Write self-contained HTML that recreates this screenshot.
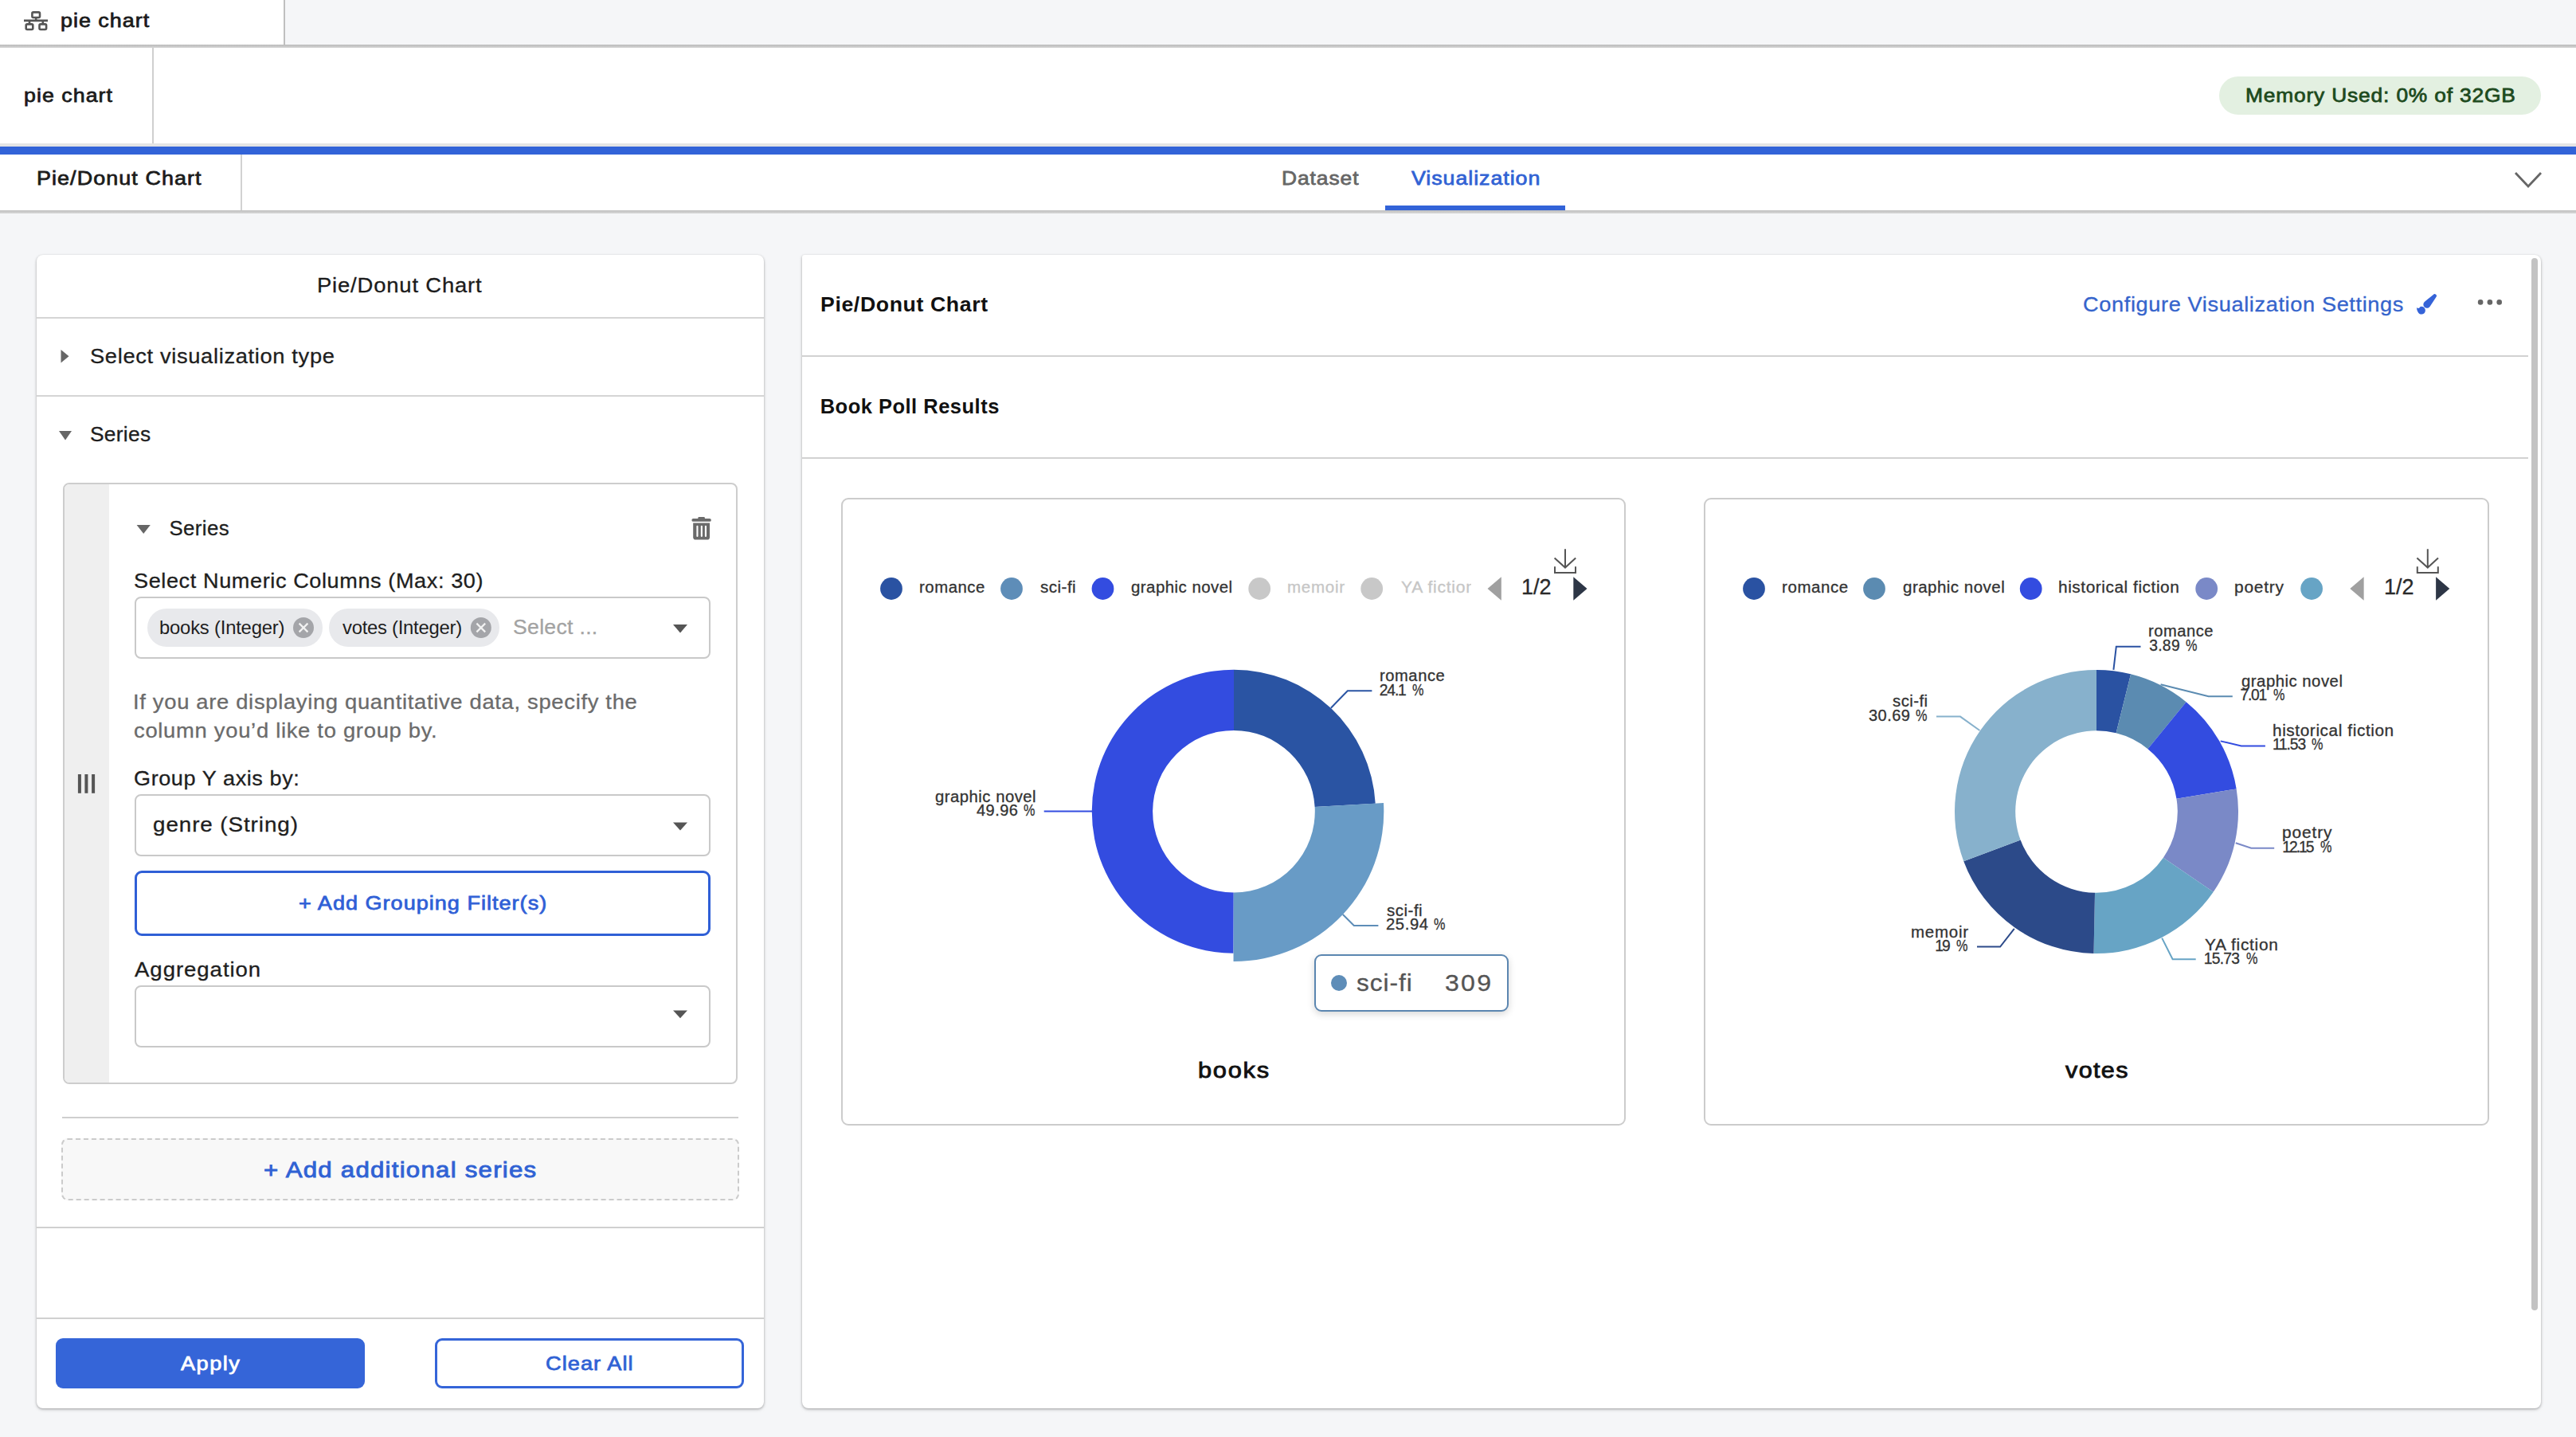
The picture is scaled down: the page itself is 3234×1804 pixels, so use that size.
<!DOCTYPE html><html><head><meta charset="utf-8"><title>pie chart</title><style>
html,body{margin:0;padding:0;}
body{width:3234px;height:1804px;overflow:hidden;position:relative;background:#f5f6f8;font-family:"Liberation Sans",sans-serif;}
.t{position:absolute;white-space:nowrap;line-height:1;}
.b{position:absolute;}
</style></head><body><div class="b" style="left:0px;top:0px;width:3234px;height:56px;background:#f5f6f8"></div>
<div class="b" style="left:0px;top:0px;width:358px;height:56px;background:#fff;border-right:2px solid #bfbfbf;box-sizing:border-box"></div>
<div class="b" style="left:0px;top:56px;width:3234px;height:4px;background:linear-gradient(#bababa,#d4d4d4)"></div>
<div class="b" style="left:0px;top:60px;width:3234px;height:120px;background:#fff"></div>
<div class="b" style="left:191px;top:60px;width:2px;height:120px;background:#cfcfcf"></div>
<div class="b" style="left:0px;top:180px;width:3234px;height:4px;background:#e4e4e4"></div>
<div class="b" style="left:0px;top:184px;width:3234px;height:10px;background:#3263d8"></div>
<div class="b" style="left:0px;top:194px;width:3234px;height:70px;background:#fff"></div>
<div class="b" style="left:302px;top:194px;width:2px;height:70px;background:#d2d2d2"></div>
<div class="b" style="left:0px;top:264px;width:3234px;height:4px;background:linear-gradient(#bfbfbf,#d8d8d8)"></div>
<div class="b" style="left:2786px;top:96px;width:404px;height:48px;background:#e3f0e1;border-radius:24px"></div>
<div class="b" style="left:1739px;top:258px;width:226px;height:6px;background:#3263d8"></div>
<svg class="b" style="left:28px;top:12px" width="34" height="28" viewBox="0 0 34 28"><g fill="none" stroke="#555" stroke-width="2.6"><rect x="12.4" y="3.4" width="9.6" height="6.6" rx="1.5"/><rect x="4.7" y="18.4" width="8.6" height="6.6" rx="1.5"/><rect x="21.5" y="18.4" width="8.6" height="6.6" rx="1.5"/><path d="M17.2 10.5V14M2 13.9H32M9 14V18M25.8 14V18"/></g></svg>
<svg class="b" style="left:3150px;top:208px" width="48" height="36"><polyline points="8,9 24,26 40,9" fill="none" stroke="#666" stroke-width="2.8"/></svg>
<div class="t" style="left:75.92px;top:14px;font-size:24.8px;color:#1b1b1b;-webkit-text-stroke:0.77px #1b1b1b;letter-spacing:0.92px;transform:scaleX(1.0842);transform-origin:0 0;">pie chart</div>
<div class="t" style="left:29.91px;top:108px;font-size:24.5px;color:#1b1b1b;-webkit-text-stroke:0.76px #1b1b1b;letter-spacing:0.97px;transform:scaleX(1.0904);transform-origin:0 0;">pie chart</div>
<div class="t" style="left:2818.94px;top:108px;font-size:24.8px;color:#1d4a1d;-webkit-text-stroke:0.77px #1d4a1d;letter-spacing:0.79px;transform:scaleX(1.0617);transform-origin:0 0;">Memory Used: 0% of 32GB</div>
<div class="t" style="left:45.91px;top:212px;font-size:24.8px;color:#1b1b1b;-webkit-text-stroke:0.77px #1b1b1b;letter-spacing:0.99px;transform:scaleX(1.0852);transform-origin:0 0;">Pie/Donut Chart</div>
<div class="t" style="left:1608.94px;top:212px;font-size:24.8px;color:#666666;-webkit-text-stroke:0.77px #666666;letter-spacing:0.86px;transform:scaleX(1.0647);transform-origin:0 0;">Dataset</div>
<div class="t" style="left:1771.5px;top:212px;font-size:24.8px;color:#3062d4;-webkit-text-stroke:0.77px #3062d4;letter-spacing:0.87px;transform:scaleX(1.0815);transform-origin:0 0;">Visualization</div>
<div class="b" style="left:46px;top:320px;width:913px;height:1448px;background:#fff;border-radius:8px;box-shadow:0 1px 3px rgba(0,0,0,0.28),0 2px 5px rgba(0,0,0,0.10)"></div>
<div class="b" style="left:46px;top:397.5px;width:913px;height:2px;background:#d5d5d5"></div>
<div class="b" style="left:46px;top:495.5px;width:913px;height:2px;background:#d5d5d5"></div>
<svg class="b" style="left:0;top:0" width="960" height="1800"><polygon points="76.5,439 86.5,447.3 76.5,455.6" fill="#666"/><polygon points="74,541 90,541 82,552.5" fill="#666"/></svg>
<div class="t" style="left:397.87px;top:346px;font-size:25.8px;color:#1b1b1b;-webkit-text-stroke:0.3px #1b1b1b;letter-spacing:0.77px;transform:scaleX(1.0632);transform-origin:0 0;">Pie/Donut Chart</div>
<div class="t" style="left:113.44px;top:435px;font-size:25.8px;color:#1e1e1e;-webkit-text-stroke:0.3px #1e1e1e;letter-spacing:0.62px;transform:scaleX(1.0575);transform-origin:0 0;">Select visualization type</div>
<div class="t" style="left:113.48px;top:533px;font-size:25.8px;color:#1e1e1e;-webkit-text-stroke:0.3px #1e1e1e;letter-spacing:0.29px;transform:scaleX(1.0208);transform-origin:0 0;">Series</div>
<div class="b" style="left:78.5px;top:606px;width:847.5px;height:755px;background:#fff;border:2px solid #cdcdcd;border-radius:8px;box-sizing:border-box;overflow:hidden"></div>
<div class="b" style="left:81px;top:608px;width:56px;height:751px;background:#efefef;border-radius:6px 0 0 6px"></div>
<svg class="b" style="left:0;top:0" width="960" height="1400"><polygon points="171.6,659 188.8,659 180.2,670" fill="#666"/><rect x="97.9" y="972" width="4" height="23.8" fill="#555"/><rect x="106.4" y="972" width="4" height="23.8" fill="#555"/><rect x="115.1" y="972" width="4" height="23.8" fill="#555"/><g fill="#6a6a6a"><rect x="868.4" y="651" width="24.4" height="3.8" rx="1.9"/><rect x="876.3" y="649" width="8.6" height="3" rx="1.2"/><path d="M870.2 656.4H891V674.5Q891 677.6 887.9 677.6H873.3Q870.2 677.6 870.2 674.5Z"/></g><g fill="#fff"><rect x="874.4" y="659.8" width="2.1" height="14.2" rx="1"/><rect x="879.8" y="659.8" width="2.1" height="14.2" rx="1"/><rect x="884.9" y="659.8" width="2.1" height="14.2" rx="1"/></g><polygon points="845,784 863,784 854,794.4" fill="#555"/><polygon points="845,1032.6 863,1032.6 854,1042.4" fill="#555"/><polygon points="845,1268.4 863,1268.4 854,1278.2" fill="#555"/></svg>
<div class="t" style="left:212.5px;top:651px;font-size:25.8px;color:#1e1e1e;-webkit-text-stroke:0.3px #1e1e1e;letter-spacing:0.4px;">Series</div>
<div class="t" style="left:167.95px;top:717px;font-size:25.8px;color:#1e1e1e;-webkit-text-stroke:0.3px #1e1e1e;letter-spacing:0.59px;transform:scaleX(1.0484);transform-origin:0 0;">Select Numeric Columns (Max: 30)</div>
<div class="b" style="left:169px;top:749px;width:723px;height:78px;border:2px solid #c9c9c9;border-radius:8px;box-sizing:border-box"></div>
<div class="b" style="left:185px;top:764px;width:219.7px;height:47.7px;background:#e8e9ec;border-radius:24px"></div>
<div class="b" style="left:413.4px;top:764px;width:213.6px;height:47.7px;background:#e8e9ec;border-radius:24px"></div>
<svg class="b" style="left:0;top:0" width="700" height="850"><circle cx="381" cy="788" r="13" fill="#a4a5a9"/><circle cx="603.8" cy="788" r="13" fill="#a4a5a9"/><path d="M375.6 782.6L386.4 793.4M386.4 782.6L375.6 793.4M598.4 782.6L609.2 793.4M609.2 782.6L598.4 793.4" stroke="#f2f2f2" stroke-width="2.2"/></svg>
<div class="t" style="left:200px;top:776px;font-size:23.8px;color:#1e1e1e;letter-spacing:-0.19px;">books (Integer)</div>
<div class="t" style="left:430px;top:776px;font-size:23.8px;color:#1e1e1e;letter-spacing:-0.24px;">votes (Integer)</div>
<div class="t" style="left:643.97px;top:775px;font-size:25.8px;color:#a3a3a3;-webkit-text-stroke:0.3px #a3a3a3;letter-spacing:0.31px;transform:scaleX(1.0296);transform-origin:0 0;">Select ...</div>
<div class="t" style="left:166.88px;top:869px;font-size:25.8px;color:#6b6b6b;-webkit-text-stroke:0.3px #6b6b6b;letter-spacing:0.64px;transform:scaleX(1.0613);transform-origin:0 0;">If you are displaying quantitative data, specify the</div>
<div class="t" style="left:167.94px;top:905px;font-size:25.8px;color:#6b6b6b;-webkit-text-stroke:0.3px #6b6b6b;letter-spacing:0.67px;transform:scaleX(1.0611);transform-origin:0 0;">column you’d like to group by.</div>
<div class="t" style="left:167.95px;top:965px;font-size:25.8px;color:#1e1e1e;-webkit-text-stroke:0.3px #1e1e1e;letter-spacing:0.57px;transform:scaleX(1.0481);transform-origin:0 0;">Group Y axis by:</div>
<div class="b" style="left:169px;top:996.6px;width:723px;height:78.4px;border:2px solid #c9c9c9;border-radius:8px;box-sizing:border-box"></div>
<div class="t" style="left:191.92px;top:1023px;font-size:25.8px;color:#1e1e1e;-webkit-text-stroke:0.3px #1e1e1e;letter-spacing:0.86px;transform:scaleX(1.0769);transform-origin:0 0;">genre (String)</div>
<div class="b" style="left:169px;top:1092.7px;width:723px;height:82.1px;border:3px solid #2f5fd6;border-radius:9px;box-sizing:border-box"></div>
<div class="t" style="left:374.91px;top:1122px;font-size:24.8px;color:#2f5fd6;-webkit-text-stroke:0.77px #2f5fd6;letter-spacing:0.94px;transform:scaleX(1.0897);transform-origin:0 0;">+ Add Grouping Filter(s)</div>
<div class="t" style="left:169px;top:1205px;font-size:25.8px;color:#1e1e1e;-webkit-text-stroke:0.3px #1e1e1e;letter-spacing:0.89px;transform:scaleX(1.0688);transform-origin:0 0;">Aggregation</div>
<div class="b" style="left:169px;top:1237px;width:723px;height:78px;border:2px solid #c9c9c9;border-radius:8px;box-sizing:border-box"></div>
<div class="b" style="left:78px;top:1402px;width:849px;height:2px;background:#cfcfcf"></div>
<div class="b" style="left:76.8px;top:1428.8px;width:850.8px;height:78.2px;background:#f8f8f8;border:2px dashed #cbcbcb;border-radius:8px;box-sizing:border-box"></div>
<div class="t" style="left:330.9px;top:1454px;font-size:28.5px;color:#3062d4;-webkit-text-stroke:0.88px #3062d4;letter-spacing:1.13px;transform:scaleX(1.0951);transform-origin:0 0;">+ Add additional series</div>
<div class="b" style="left:46px;top:1539.5px;width:913px;height:2px;background:#d0d0d0"></div>
<div class="b" style="left:46px;top:1653.5px;width:913px;height:2px;background:#d0d0d0"></div>
<div class="b" style="left:69.8px;top:1680.3px;width:388.7px;height:63.1px;background:#3565d8;border-radius:9px"></div>
<div class="b" style="left:546.3px;top:1680.3px;width:388px;height:63.1px;border:3px solid #3565d8;border-radius:9px;box-sizing:border-box"></div>
<div class="t" style="left:227px;top:1700px;font-size:24.8px;color:#ffffff;-webkit-text-stroke:0.77px #ffffff;letter-spacing:1.35px;transform:scaleX(1.0937);transform-origin:0 0;">Apply</div>
<div class="t" style="left:685.31px;top:1700px;font-size:24.8px;color:#3062d4;-webkit-text-stroke:0.77px #3062d4;letter-spacing:0.97px;transform:scaleX(1.0944);transform-origin:0 0;">Clear All</div>
<div class="b" style="left:1006.7px;top:320px;width:2183.3px;height:1448px;background:#fff;border-radius:3px 8px 8px 8px;box-shadow:0 1px 3px rgba(0,0,0,0.28),0 2px 5px rgba(0,0,0,0.10)"></div>
<div class="b" style="left:1006.7px;top:445.5px;width:2167.3px;height:2px;background:#d2d2d2"></div>
<div class="b" style="left:1006.7px;top:573.5px;width:2167.3px;height:2px;background:#d2d2d2"></div>
<div class="b" style="left:3178px;top:324px;width:8.3px;height:1321.4px;background:#c3c3c3;border-radius:4px"></div>
<div class="t" style="left:1029.61px;top:370px;font-size:25.5px;color:#111111;font-weight:700;letter-spacing:0.59px;transform:scaleX(1.0453);transform-origin:0 0;">Pie/Donut Chart</div>
<div class="t" style="left:2614.85px;top:370px;font-size:25.8px;color:#3564cc;-webkit-text-stroke:0.3px #3564cc;letter-spacing:0.59px;transform:scaleX(1.0533);transform-origin:0 0;">Configure Visualization Settings</div>
<div class="t" style="left:1029.7px;top:498px;font-size:25.5px;color:#111111;font-weight:700;letter-spacing:0.49px;">Book Poll Results</div>
<svg class="b" style="left:3025px;top:360px" width="130" height="40" viewBox="0 0 130 40"><path d="M29.8,9.9 L19.0,18.8 A4.5,4.5 0 1 0 25.5,24.9 L33.2,13.2 A2.35,2.35 0 0 0 29.8,9.9 Z" fill="#3563d8"/><path d="M9.0,25.9 Q11.4,28.6 13.6,25.0 A4.9,4.9 0 1 1 10.4,31.4 Q9.0,29.6 9.0,25.9 Z" fill="#3563d8"/><circle cx="89.1" cy="19.4" r="3.3" fill="#666"/><circle cx="100.9" cy="19.4" r="3.3" fill="#666"/><circle cx="112.7" cy="19.4" r="3.3" fill="#666"/></svg>
<div class="b" style="left:1055.8px;top:625px;width:985.2px;height:788px;border:2px solid #cccccc;border-radius:9px;box-sizing:border-box"></div>
<div class="b" style="left:2138.6px;top:625px;width:986.4px;height:788px;border:2px solid #cccccc;border-radius:9px;box-sizing:border-box"></div>
<svg class="b" style="left:0;top:0" width="3234" height="1804"><circle cx="1119" cy="739" r="13.9" fill="#2a52a2"/><circle cx="1270" cy="739" r="13.9" fill="#5e8db8"/><circle cx="1384.5" cy="739" r="13.9" fill="#334ce0"/><circle cx="1581.2" cy="739" r="13.9" fill="#c8c8c8"/><circle cx="1722.2" cy="739" r="13.9" fill="#c8c8c8"/><circle cx="2202" cy="739" r="13.9" fill="#2a52a2"/><circle cx="2353" cy="739" r="13.9" fill="#5b8bb1"/><circle cx="2549.7" cy="739" r="13.9" fill="#334ce0"/><circle cx="2770.2" cy="739" r="13.9" fill="#7a89c7"/><circle cx="2902.1" cy="739" r="13.9" fill="#67a4c5"/><polygon points="1867.5,739 1884.8,724.3 1884.8,753.8" fill="#a0a0a0"/><polygon points="1975.3,724.3 1992.5,739 1975.3,753.8" fill="#2d3646"/><g fill="none" stroke="#555" stroke-width="2"><path d="M1965 689.2V712.6M1951.6 700.6L1965 712.6L1978.2 700.6M1952 711.2V719H1978V711.2"/></g><polygon points="2950.3,739 2967.6,724.3 2967.6,753.8" fill="#a0a0a0"/><polygon points="3058.1,724.3 3075.3,739 3058.1,753.8" fill="#2d3646"/><g fill="none" stroke="#555" stroke-width="2"><path d="M3047.8 689.2V712.6M3034.3999999999996 700.6L3047.8 712.6L3061.0 700.6M3034.8 711.2V719H3060.8V711.2"/></g><path d="M1549.00,840.70 A178,178 0 0 1 1726.72,1008.64 L1650.64,1012.95 A101.8,101.8 0 0 0 1549.00,916.90 Z" fill="#2a54a3"/><path d="M1548.55,1196.70 A178,178 0 0 1 1549.00,840.70 L1549.00,916.90 A101.8,101.8 0 0 0 1548.74,1120.50 Z" fill="#334ce0"/><path d="M1737.00,1008.06 A188.3,188.3 0 0 1 1548.53,1207.00 L1548.74,1120.50 A101.8,101.8 0 0 0 1650.64,1012.95 Z" fill="#689bc6"/><polyline points="1670.9,888.7 1691.8,867.2 1722.4,867.2" fill="none" stroke="#2a54a3" stroke-width="2"/><polyline points="1310.7,1018.5 1371,1018.5" fill="none" stroke="#334ce0" stroke-width="2"/><polyline points="1685.8,1148 1699.8,1161.9 1730.4,1161.9" fill="none" stroke="#5e8db8" stroke-width="2"/><path d="M2632.00,841.00 A178,178 0 0 1 2675.07,846.29 L2656.63,920.23 A101.8,101.8 0 0 0 2632.00,917.20 Z" fill="#2a52a2"/><path d="M2675.07,846.29 A178,178 0 0 1 2744.60,881.14 L2696.40,940.16 A101.8,101.8 0 0 0 2656.63,920.23 Z" fill="#5b8bb1"/><path d="M2744.60,881.14 A178,178 0 0 1 2807.68,990.38 L2732.48,1002.63 A101.8,101.8 0 0 0 2696.40,940.16 Z" fill="#334ce0"/><path d="M2807.68,990.38 A178,178 0 0 1 2778.72,1119.79 L2715.91,1076.64 A101.8,101.8 0 0 0 2732.48,1002.63 Z" fill="#7a89c7"/><path d="M2778.72,1119.79 A178,178 0 0 1 2628.53,1196.97 L2630.02,1120.78 A101.8,101.8 0 0 0 2715.91,1076.64 Z" fill="#67a4c5"/><path d="M2628.53,1196.97 A178,178 0 0 1 2465.25,1081.29 L2536.64,1054.62 A101.8,101.8 0 0 0 2630.02,1120.78 Z" fill="#2c4a89"/><path d="M2465.25,1081.29 A178,178 0 0 1 2632.00,841.00 L2632.00,917.20 A101.8,101.8 0 0 0 2536.64,1054.62 Z" fill="#87b1cc"/><g fill="none" stroke-width="2"><polyline points="2653.4,840.8 2656.8,811.8 2687.5,811.8" stroke="#2a52a2"/><polyline points="2712.6,859.2 2772.7,874.2 2802.8,874.2" stroke="#5b8bb1"/><polyline points="2787.7,930.4 2813.8,936.4 2843.9,936.4" stroke="#334ce0"/><polyline points="2806.8,1058.3 2826.2,1064.7 2855.2,1064.7" stroke="#7a89c7"/><polyline points="2714.2,1177.6 2727.6,1204.3 2756.7,1204.3" stroke="#67a4c5"/><polyline points="2528.8,1165.9 2511.1,1188.6 2482,1188.6" stroke="#2c4a89"/><polyline points="2485.4,917 2461,899.6 2431,899.6" stroke="#87b1cc"/></g></svg>
<div class="t" style="left:1153.76px;top:728px;font-size:19.5px;color:#333333;-webkit-text-stroke:0.3px #333333;letter-spacing:0.51px;transform:scaleX(1.0432);transform-origin:0 0;">romance</div>
<div class="t" style="left:1306px;top:728px;font-size:19.5px;color:#333333;-webkit-text-stroke:0.3px #333333;letter-spacing:0.43px;transform:scaleX(1.0577);transform-origin:0 0;">sci-fi</div>
<div class="t" style="left:1420px;top:728px;font-size:19.5px;color:#333333;-webkit-text-stroke:0.3px #333333;letter-spacing:0.44px;transform:scaleX(1.0478);transform-origin:0 0;">graphic novel</div>
<div class="t" style="left:1615.95px;top:728px;font-size:19.5px;color:#c6c6c6;-webkit-text-stroke:0.3px #c6c6c6;letter-spacing:0.66px;transform:scaleX(1.0547);transform-origin:0 0;">memoir</div>
<div class="t" style="left:1910px;top:724px;font-size:27px;color:#2a2a2a;-webkit-text-stroke:0.3px #2a2a2a;">1/2</div>
<div class="t" style="left:2236.55px;top:728px;font-size:19.5px;color:#333333;-webkit-text-stroke:0.3px #333333;letter-spacing:0.57px;transform:scaleX(1.0486);transform-origin:0 0;">romance</div>
<div class="t" style="left:2388.5px;top:728px;font-size:19.5px;color:#333333;-webkit-text-stroke:0.3px #333333;letter-spacing:0.46px;transform:scaleX(1.0509);transform-origin:0 0;">graphic novel</div>
<div class="t" style="left:2584.23px;top:728px;font-size:19.5px;color:#333333;-webkit-text-stroke:0.3px #333333;letter-spacing:0.51px;transform:scaleX(1.0697);transform-origin:0 0;">historical fiction</div>
<div class="t" style="left:2804.73px;top:728px;font-size:19.5px;color:#333333;-webkit-text-stroke:0.3px #333333;letter-spacing:0.73px;transform:scaleX(1.0722);transform-origin:0 0;">poetry</div>
<div class="t" style="left:2993px;top:724px;font-size:27px;color:#2a2a2a;-webkit-text-stroke:0.3px #2a2a2a;">1/2</div>
<div class="t" style="left:1731.75px;top:839px;font-size:19.3px;color:#333333;-webkit-text-stroke:0.3px #333333;letter-spacing:0.53px;transform:scaleX(1.0453);transform-origin:0 0;">romance</div>
<div class="t" style="left:1173.7px;top:991px;font-size:19.3px;color:#333333;-webkit-text-stroke:0.3px #333333;letter-spacing:0.47px;transform:scaleX(1.0522);transform-origin:0 0;">graphic novel</div>
<div class="t" style="left:1740.8px;top:1134px;font-size:19.3px;color:#333333;-webkit-text-stroke:0.3px #333333;letter-spacing:0.47px;transform:scaleX(1.0641);transform-origin:0 0;">sci-fi</div>
<div class="t" style="left:2697.16px;top:783px;font-size:19.3px;color:#333333;-webkit-text-stroke:0.3px #333333;letter-spacing:0.52px;transform:scaleX(1.0439);transform-origin:0 0;">romance</div>
<div class="t" style="left:2813.5px;top:846px;font-size:19.3px;color:#333333;-webkit-text-stroke:0.3px #333333;letter-spacing:0.48px;transform:scaleX(1.0535);transform-origin:0 0;">graphic novel</div>
<div class="t" style="left:2852.82px;top:908px;font-size:19.3px;color:#333333;-webkit-text-stroke:0.3px #333333;letter-spacing:0.55px;transform:scaleX(1.0781);transform-origin:0 0;">historical fiction</div>
<div class="t" style="left:2865.12px;top:1036px;font-size:19.3px;color:#333333;-webkit-text-stroke:0.3px #333333;letter-spacing:0.81px;transform:scaleX(1.0830);transform-origin:0 0;">poetry</div>
<div class="t" style="left:2767.7px;top:1177px;font-size:19.3px;color:#333333;-webkit-text-stroke:0.3px #333333;letter-spacing:0.66px;transform:scaleX(1.0827);transform-origin:0 0;">YA fiction</div>
<div class="t" style="left:2398.54px;top:1161px;font-size:19.3px;color:#333333;-webkit-text-stroke:0.3px #333333;letter-spacing:0.73px;transform:scaleX(1.0619);transform-origin:0 0;">memoir</div>
<div class="t" style="left:2376.2px;top:871px;font-size:19.3px;color:#333333;-webkit-text-stroke:0.3px #333333;letter-spacing:0.42px;transform:scaleX(1.0564);transform-origin:0 0;">sci-fi</div>
<div class="t" style="left:1731.8px;top:857px;font-size:19.3px;color:#333333;-webkit-text-stroke:0.3px #333333;letter-spacing:-1.17px;">24.1</div>
<div class="t" style="left:1773.1px;top:857px;font-size:19.3px;color:#333333;-webkit-text-stroke:0.3px #333333;transform:scaleX(0.8412);transform-origin:0 0;">%</div>
<div class="t" style="left:1225.9px;top:1008px;font-size:19.3px;color:#333333;-webkit-text-stroke:0.3px #333333;letter-spacing:0.43px;transform:scaleX(1.0375);transform-origin:0 0;">49.96</div>
<div class="t" style="left:1285.3px;top:1008px;font-size:19.3px;color:#333333;-webkit-text-stroke:0.3px #333333;transform:scaleX(0.8412);transform-origin:0 0;">%</div>
<div class="t" style="left:1739.75px;top:1151px;font-size:19.3px;color:#333333;-webkit-text-stroke:0.3px #333333;letter-spacing:0.56px;transform:scaleX(1.0500);transform-origin:0 0;">25.94</div>
<div class="t" style="left:1800.3px;top:1151px;font-size:19.3px;color:#333333;-webkit-text-stroke:0.3px #333333;transform:scaleX(0.8412);transform-origin:0 0;">%</div>
<div class="t" style="left:2698.2px;top:801px;font-size:19.3px;color:#333333;-webkit-text-stroke:0.3px #333333;letter-spacing:0.3px;">3.89</div>
<div class="t" style="left:2743.9px;top:801px;font-size:19.3px;color:#333333;-webkit-text-stroke:0.3px #333333;transform:scaleX(0.8412);transform-origin:0 0;">%</div>
<div class="t" style="left:2812.5px;top:863px;font-size:19.3px;color:#333333;-webkit-text-stroke:0.3px #333333;letter-spacing:-1.23px;">7.01</div>
<div class="t" style="left:2853.6px;top:863px;font-size:19.3px;color:#333333;-webkit-text-stroke:0.3px #333333;transform:scaleX(0.8412);transform-origin:0 0;">%</div>
<div class="t" style="left:2852.9px;top:925px;font-size:19.3px;color:#333333;-webkit-text-stroke:0.3px #333333;letter-spacing:-1.15px;">11.53</div>
<div class="t" style="left:2902.1px;top:925px;font-size:19.3px;color:#333333;-webkit-text-stroke:0.3px #333333;transform:scaleX(0.8412);transform-origin:0 0;">%</div>
<div class="t" style="left:2865.2px;top:1054px;font-size:19.3px;color:#333333;-webkit-text-stroke:0.3px #333333;letter-spacing:-1.97px;">12.15</div>
<div class="t" style="left:2913.1px;top:1054px;font-size:19.3px;color:#333333;-webkit-text-stroke:0.3px #333333;transform:scaleX(0.8412);transform-origin:0 0;">%</div>
<div class="t" style="left:2766.7px;top:1194px;font-size:19.3px;color:#333333;-webkit-text-stroke:0.3px #333333;letter-spacing:-0.75px;">15.73</div>
<div class="t" style="left:2819.5px;top:1194px;font-size:19.3px;color:#333333;-webkit-text-stroke:0.3px #333333;transform:scaleX(0.8412);transform-origin:0 0;">%</div>
<div class="t" style="left:2429.3px;top:1178px;font-size:19.3px;color:#333333;-webkit-text-stroke:0.3px #333333;letter-spacing:-2px;">19</div>
<div class="t" style="left:2456.1px;top:1178px;font-size:19.3px;color:#333333;-webkit-text-stroke:0.3px #333333;transform:scaleX(0.8412);transform-origin:0 0;">%</div>
<div class="t" style="left:2345.8px;top:889px;font-size:19.3px;color:#333333;-webkit-text-stroke:0.3px #333333;letter-spacing:0.45px;transform:scaleX(1.0385);transform-origin:0 0;">30.69</div>
<div class="t" style="left:2405.3px;top:889px;font-size:19.3px;color:#333333;-webkit-text-stroke:0.3px #333333;transform:scaleX(0.8412);transform-origin:0 0;">%</div>
<div class="t" style="left:1503.61px;top:1329px;font-size:28.2px;color:#111111;-webkit-text-stroke:0.87px #111111;letter-spacing:1.58px;transform:scaleX(1.0932);transform-origin:0 0;">books</div>
<div class="t" style="left:2593px;top:1329px;font-size:28.2px;color:#111111;-webkit-text-stroke:0.87px #111111;letter-spacing:1.27px;transform:scaleX(1.0821);transform-origin:0 0;">votes</div>
<div class="b" style="left:1740px;top:720px;width:107px;height:40px;overflow:hidden"><div class="t" style="left:18.7px;top:8px;font-size:19.5px;color:#c6c6c6;-webkit-text-stroke:0.3px #c6c6c6;letter-spacing:0.67px;transform:scaleX(1.0823);transform-origin:0 0;">YA fiction</div></div>
<div class="b" style="left:1649.5px;top:1198.4px;width:244.2px;height:71.3px;background:#fff;border:2px solid #5b86b0;border-radius:9px;box-sizing:border-box;box-shadow:0 3px 10px rgba(0,0,0,0.16)"></div>
<svg class="b" style="left:1660px;top:1220px" width="40" height="30"><circle cx="21" cy="14" r="10" fill="#5e8db8"/></svg>
<div class="t" style="left:1703.22px;top:1219px;font-size:29.3px;color:#555555;-webkit-text-stroke:0.3px #555555;letter-spacing:0.86px;transform:scaleX(1.0802);transform-origin:0 0;">sci-fi</div>
<div class="t" style="left:1813.8px;top:1219px;font-size:29.3px;color:#555555;-webkit-text-stroke:0.3px #555555;letter-spacing:2.05px;transform:scaleX(1.0957);transform-origin:0 0;">309</div></body></html>
